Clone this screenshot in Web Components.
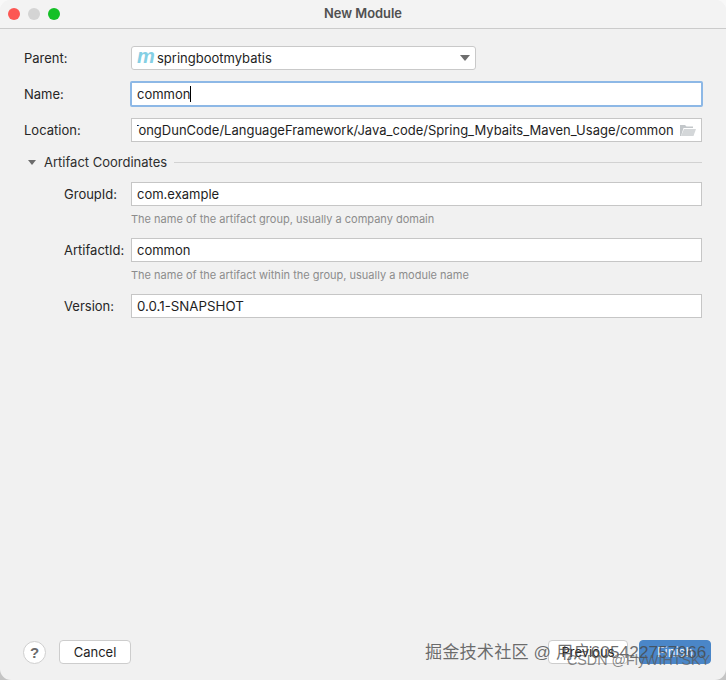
<!DOCTYPE html>
<html lang="en">
<head>
<meta charset="utf-8">
<title>New Module</title>
<style>
html, body { margin: 0; height: 100%; background: linear-gradient(#f8f8f8 90%, #c4c4c4 97%); }
body { font: 13px Inter, "Liberation Sans", sans-serif; color: #1c1c1c; overflow: hidden; }
</style>
</head>
<body>
<module-dialog>
	<title-bar slot="top">New Module</title-bar>

	<form-row label="Parent:"><combo-box>springbootmybatis</combo-box></form-row>
	<form-row label="Name:" style="--row-top:12px"><text-field focused caret>common</text-field></form-row>
	<form-row label="Location:" style="--row-top:12px"><text-field browse style="--shift:-6px">TongDunCode/LanguageFramework/Java_code/Spring_Mybaits_Maven_Usage/common</text-field></form-row>

	<section-title>Artifact Coordinates</section-title>

	<form-row indent label="GroupId:" hint="The name of the artifact group, usually a company domain"><text-field>com.example</text-field></form-row>
	<form-row indent label="ArtifactId:" hint="The name of the artifact within the group, usually a module name" style="--row-top:12px"><text-field>common</text-field></form-row>
	<form-row indent label="Version:" style="--row-top:12px"><text-field style="font-size:13.3px">0.0.1-SNAPSHOT</text-field></form-row>

	<button-bar slot="bottom"></button-bar>
</module-dialog>
<water-marks></water-marks>

<script>
// every element keeps its own template + shadow root
function tmpl(html){
	const t = document.createElement('template');
	t.innerHTML = html;
	return t;
}
function mount(el, t){
	el.attachShadow({mode: 'open'}).appendChild(t.content.cloneNode(true));
	return el.shadowRoot;
}

const dialogTmpl = tmpl(`
<style>
:host { display: flex; flex-direction: column; width: 726px; height: 680px; box-sizing: border-box;
	background: #f1f1f1; border-radius: 11px; overflow: hidden; }
main { flex: 1; padding: 17px 24px 0 24px; }
</style>
<slot name="top"></slot>
<main><slot></slot></main>
<slot name="bottom"></slot>`);
class ModuleDialog extends HTMLElement {
	constructor(){ super(); mount(this, dialogTmpl); }
}

const titleTmpl = tmpl(`
<style>
:host { display: flex; align-items: center; height: 29px; box-sizing: border-box; border-bottom: 1px solid #cbcbcb;
	background: #f3f3f3; position: relative; }
.lights { display: flex; gap: 8px; padding-left: 8px; position: relative; top: -.5px; }
.lights i { width: 12px; height: 12px; border-radius: 50%; display: block; }
.title { position: absolute; left: 0; right: 0; top: 6px; text-align: center; font: 600 12.9px Inter, "Liberation Sans", sans-serif; color: #505050; }
</style>
<div class="lights">
	<i style="background:#fc5753"></i><i style="background:#d4d4d4"></i><i style="background:#14c026"></i>
</div>
<div class="title"><slot></slot></div>`);
class TitleBar extends HTMLElement {
	constructor(){ super(); mount(this, titleTmpl); }
}

const rowTmpl = tmpl(`
<style>
:host { display: grid; grid-template-columns: 107px 1fr; margin-top: var(--row-top, 0); }
:host([indent]) { grid-template-columns: 40px 67px 1fr; }
label { align-self: start; line-height: 24px; white-space: nowrap; color: #262626; font-size: 13px; }
.hint { font-size: 11px; color: #8c8c8c; line-height: 14px; margin-top: 6px; white-space: nowrap; }
.spacer { display: none; }
:host([indent]) .spacer { display: block; }
</style>
<div class="spacer"></div>
<label></label>
<div>
	<slot></slot>
	<div class="hint" hidden></div>
</div>`);
class FormRow extends HTMLElement {
	constructor(){ super(); mount(this, rowTmpl); }
	connectedCallback(){
		this.shadowRoot.querySelector('label').textContent = this.getAttribute('label');
		const hint = this.getAttribute('hint');
		if(hint){
			const h = this.shadowRoot.querySelector('.hint');
			h.textContent = hint;
			h.hidden = false;
		}
	}
}

const fieldTmpl = tmpl(`
<style>
:host { display: flex; align-items: center; height: 24px; box-sizing: border-box; background: #fff;
	border: 1px solid #c6c6c6; padding: 0 5px; font-size: 13px; color: #1e1e1e; white-space: nowrap; overflow: hidden; }
:host([focused]) { border-color: #fff; outline: 2px solid #8db8e6; outline-offset: -1px; border-radius: 1px; overflow: visible; }
.clip { overflow: hidden; flex: none; }
.inner { display: block; margin-left: var(--shift, 0); }
.caret { display: none; width: 1px; height: 16px; background: #000; }
:host([caret]) .caret { display: block; }
svg { display: none; margin-left: auto; flex: none; }
:host([browse]) svg { display: block; margin-right: 0; }
</style>
<span class="clip"><span class="inner"><slot></slot></span></span><span class="caret"></span>
<svg width="16" height="11" viewBox="0 0 16 11">
	<path d="M0 11V0h5l1.5 1.5H13V3H3.5L1 11z" fill="#c3c7ca"/>
	<path d="M4 4h12l-2.5 7H1z" fill="#d4d7d9"/>
</svg>`);
class TextField extends HTMLElement {
	constructor(){ super(); mount(this, fieldTmpl); }
}

const comboTmpl = tmpl(`
<style>
:host { display: flex; align-items: center; width: 345px; height: 24px; box-sizing: border-box; background: #fff;
	border: 1px solid #c9c9c9; border-radius: 3px; padding: 0 5px 0 5px; font-size: 13px; color: #1e1e1e; }
.m { font: italic 700 20px/17px "Liberation Sans", sans-serif; color: #84cfe4; width: 16px; margin-right: 4px; letter-spacing: -.5px; position: relative; top: -2px; }
.arrow { margin-left: auto; width: 0; height: 0; border-left: 5px solid transparent; border-right: 5px solid transparent; border-top: 6px solid #6e6e6e; }
</style>
<span class="m">m</span><slot></slot><span class="arrow"></span>`);
class ComboBox extends HTMLElement {
	constructor(){ super(); mount(this, comboTmpl); }
}

const sectionTmpl = tmpl(`
<style>
:host { display: flex; align-items: center; height: 18px; margin: 11px 0 11px 0; font-size: 13px; color: #2e2e2e; }
.tri { width: 0; height: 0; margin: 0 8px 0 4px; border-left: 4.5px solid transparent; border-right: 4.5px solid transparent; border-top: 5px solid #6c6c6c; }
.line { flex: 1; height: 1px; background: #d2d2d2; margin-left: 7px; }
</style>
<span class="tri"></span><slot></slot><span class="line"></span>`);
class SectionTitle extends HTMLElement {
	constructor(){ super(); mount(this, sectionTmpl); }
}

const barTmpl = tmpl(`
<style>
:host { display: flex; align-items: center; padding: 0 15px 16px 23px; height: 24px; }
.help { width: 23px; height: 23px; box-sizing: border-box; border-radius: 50%; border: 1px solid #cfcfcf; background: #fff;
	display: flex; align-items: center; justify-content: center; font: 700 15px "Liberation Sans", sans-serif; color: #6a6a6a; margin-right: 13px; }
button { height: 24px; width: 72px; box-sizing: border-box; border: 1px solid #cdcdcd; border-radius: 4px; background: #fff;
	font: 13px Inter, "Liberation Sans", sans-serif; color: #1e1e1e; padding: 0; }
.right { margin-left: auto; display: flex; gap: 11px; }
.primary { background: #4a86c8; border-color: #4a86c8; color: #eaf2fb; }
</style>
<span class="help">?</span>
<button>Cancel</button>
<div class="right"><button style="width:80px">Previous</button><button class="primary">Finish</button></div>`);
class ButtonBar extends HTMLElement {
	constructor(){ super(); mount(this, barTmpl); }
}

// the two site watermarks lying over the bottom right corner
const marksTmpl = tmpl(`
<style>
:host { position: absolute; left: 0; top: 0; width: 726px; height: 680px; pointer-events: none; }
div { position: absolute; white-space: nowrap; font-family: "Liberation Sans", "Noto Sans CJK SC", sans-serif; }
.a { left: 425px; top: 638px; font-size: 17.2px; letter-spacing: .1px; color: rgba(70,70,70,.78); }
.b { left: 567px; top: 652px; font-size: 14.3px; color: rgba(90,90,90,.72); }
</style>
<div class="a">掘金技术社区 @ 用户605422757966</div>
<div class="b">CSDN @FlyWIHTSKY</div>`);
class WaterMarks extends HTMLElement {
	constructor(){ super(); mount(this, marksTmpl); }
}

customElements.define('module-dialog', ModuleDialog);
customElements.define('title-bar', TitleBar);
customElements.define('form-row', FormRow);
customElements.define('text-field', TextField);
customElements.define('combo-box', ComboBox);
customElements.define('section-title', SectionTitle);
customElements.define('button-bar', ButtonBar);
customElements.define('water-marks', WaterMarks);
</script>
</body>
</html>
